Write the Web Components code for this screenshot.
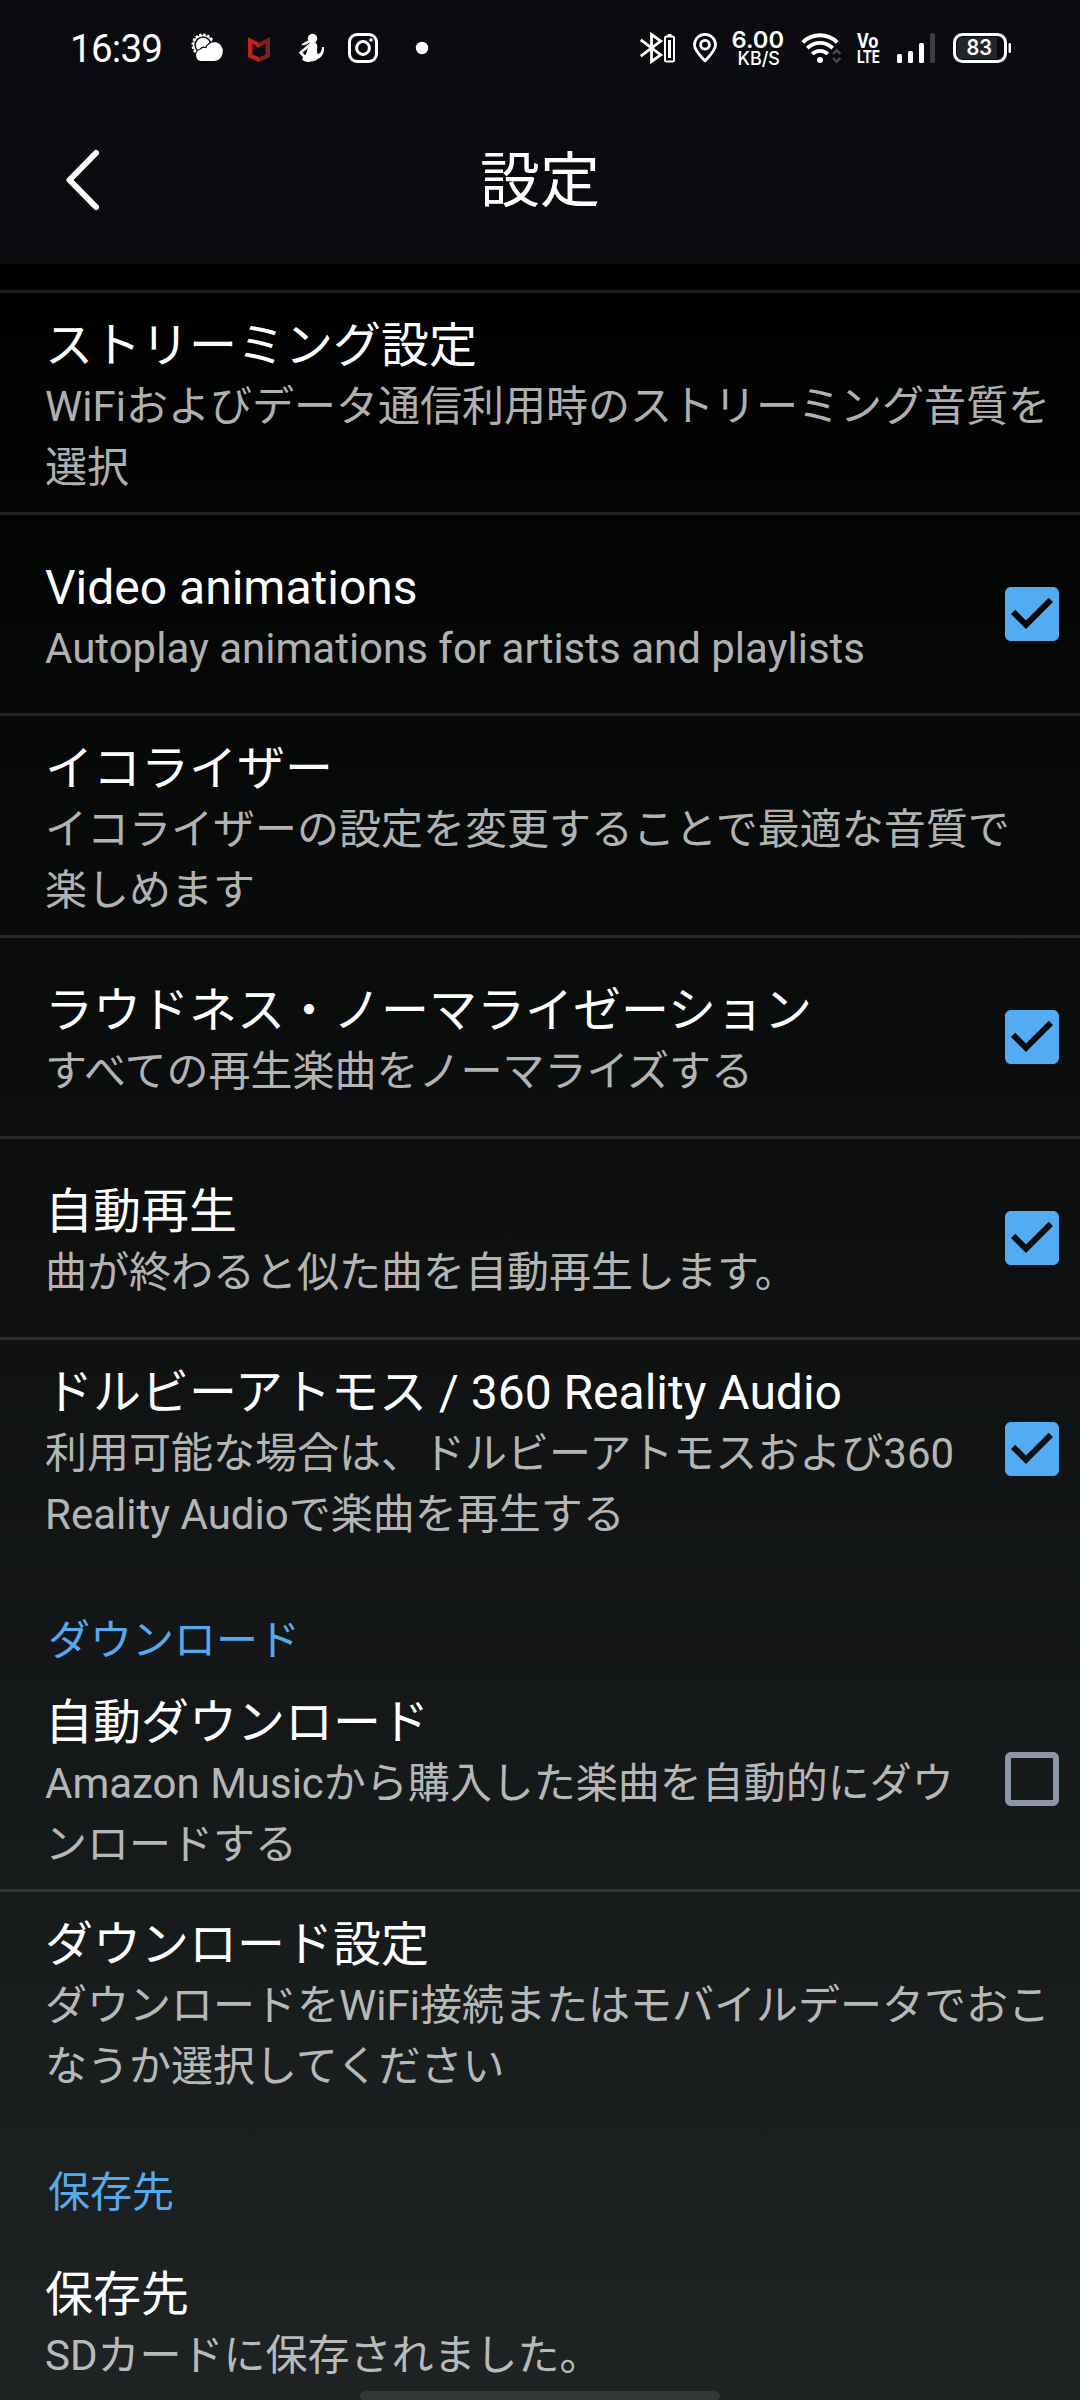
<!DOCTYPE html>
<html lang="ja">
<head>
<meta charset="utf-8">
<title>設定</title>
<style>
  html, body { margin: 0; padding: 0; background: #000; }
  body { font-family: Roboto, "Noto Sans CJK JP", sans-serif; color: #fff; }
</style>
</head>
<body>
<music-settings>
  <status-bar slot="top"></status-bar>
  <title-bar slot="top">設定</title-bar>

  <setting-row><span slot="title">ストリーミング設定</span>WiFiおよびデータ通信利用時のストリーミング音質を<br>選択</setting-row>
  <setting-row check="on"><span slot="title">Video animations</span>Autoplay animations for artists and playlists</setting-row>
  <setting-row><span slot="title">イコライザー</span>イコライザーの設定を変更することで最適な音質で<br>楽しめます</setting-row>
  <setting-row check="on"><span slot="title">ラウドネス・ノーマライゼーション</span>すべての再生楽曲をノーマライズする</setting-row>
  <setting-row check="on"><span slot="title">自動再生</span>曲が終わると似た曲を自動再生します。</setting-row>
  <setting-row check="on" tall last><span slot="title">ドルビーアトモス / 360 Reality Audio</span>利用可能な場合は、ドルビーアトモスおよび360<br>Reality Audioで楽曲を再生する</setting-row>
  <section-label>ダウンロード</section-label>
  <setting-row check="off" tall><span slot="title">自動ダウンロード</span>Amazon Musicから購入した楽曲を自動的にダウ<br>ンロードする</setting-row>
  <setting-row last><span slot="title">ダウンロード設定</span>ダウンロードをWiFi接続またはモバイルデータでおこ<br>なうか選択してください</setting-row>
  <section-label>保存先</section-label>
  <setting-row last><span slot="title">保存先</span>SDカードに保存されました。</setting-row>
</music-settings>

<script>
class Base extends HTMLElement {
  constructor() {
    super();
    this.attachShadow({ mode: 'open' }).innerHTML = this.render();
  }
}

customElements.define('music-settings', class extends Base {
  render() {
    return `<style>
      :host { display: flex; flex-direction: column; position: relative; width: 1080px; height: 2400px; overflow: hidden; background: #000; }
      header { flex: none; height: 264px; background: #0a0b0f; }
      main { flex: 1; min-height: 0; background: linear-gradient(#000, #1f2324); overflow: hidden; }
      .rule { height: 3px; margin-top: 26px; background: rgba(255,255,255,.12); }
      .home { position: absolute; left: 360px; bottom: 0; width: 360px; height: 9px; border-radius: 6px 6px 4px 4px; background: #343839; }
    </style>
    <header><slot name="top"></slot></header>
    <main><div class="rule"></div><slot></slot></main>
    <div class="home"></div>`;
  }
});

/* Each status item is a 96px high cell whose viewBox starts at its own x on the bar. */
const cell = (x0, x1, body) =>
  `<svg width="${x1 - x0}" height="96" viewBox="${x0} 0 ${x1 - x0} 96">${body}</svg>`;

customElements.define('status-bar', class extends Base {
  render() {
    return `<style>
      :host { display: flex; justify-content: space-between; height: 96px; }
      div { display: flex; }
      svg { display: block; flex: none; fill: #fff; }
      .line { fill: none; stroke: #fff; }
      text { font-family: Inter, sans-serif; }
      .r { font-family: Roboto, sans-serif; }
    </style>
    <div>
      ${cell(0, 180, `<text class="r" x="70" y="61.700" font-size="38.500" textLength="93" lengthAdjust="spacing">16:39</text>`)}
      ${cell(180, 236, `
        <circle cx="203" cy="45" r="10.2" class="line" stroke-width="2.6" stroke-dasharray="2.4 1.6"/>
        <circle cx="203" cy="45" r="9.4" class="line" stroke-width="1.4"/>
        <circle cx="203" cy="45" r="7.2"/>
        <g stroke="#0a0b0f" stroke-width="2.4" paint-order="stroke">
        <path d="M201.500 61a5.700 5.700 0 0 1-1.200-11.200a5.400 5.400 0 0 1 6-1.600a8.400 8.400 0 0 1 16.400 3.300c0 5.600-3.800 9.500-8.500 9.500z"/></g>`)}
      ${cell(236, 284, `
        <path fill="#c3201f" d="M248 37l11 5.700v5l-6.500-4.200v10.900l6.500 2.800v5l-11-5.200z"/>
        <path fill="#7e2018" d="M270 37l-11 5.700v5l6.500-4.200v10.900l-6.500 2.800v5l11-5.200z"/>`)}
      ${cell(284, 336, `
        <circle cx="312.500" cy="38.600" r="4.800"/>
        <path d="M309.500 40.500c-3 .3-6 2-8.300 4.500c3 .8 6.500-.5 8.600-3z"/>
        <path d="M309.500 42.500h6c1.500 1.500 2 3.500 1.700 6c-.3 2.200-.2 4 .5 5.800c3-1 4.300-3.500 4.200-7.300l2.100 .2c.5 5.800-2 9.800-6.300 11.900c-2.500 2.700-11.200 3.900-14.700 1.500c-1.200-1-.7-2.800 .6-4.100c2.300-1.700 3.400-3.500 3.400-6z"/>
        <path class="line" stroke-width="2.600" stroke-linejoin="round" d="M309.500 45l-9 7.700l6 5.600"/>`)}
      ${cell(336, 392, `
        <rect class="line" x="349.500" y="34.500" width="27" height="27" rx="7.500" stroke-width="3"/>
        <circle class="line" cx="363" cy="48" r="6.400" stroke-width="3"/>
        <circle cx="371" cy="40" r="1.800"/>`)}
      ${cell(392, 440, `<circle cx="422" cy="48" r="6.200"/>`)}
    </div>
    <div>
      ${cell(630, 684, `
        <path class="line" stroke-width="2.800" d="M640.800 39.800l20 15.200l-9.300 6.500v-27l9.300 6.500l-20 15.200"/>
        <rect class="line" x="665" y="36.500" width="9" height="25" rx="1.500" stroke-width="2"/>
        <rect x="667.500" y="34" width="4" height="2.500"/><rect x="668" y="40" width="3" height="18"/>`)}
      ${cell(684, 726, `
        <path class="line" stroke-width="2.800" stroke-linejoin="round" d="M705 61c-3.200-4-10.500-10-10.500-16.200a10.500 10.500 0 0 1 21 0c0 6.200-7.300 12.200-10.500 16.200z"/>
        <circle class="line" cx="705" cy="44.700" r="4.400" stroke-width="2.800"/>`)}
      ${cell(726, 792, `
        <text x="731.500" y="47.500" font-size="23" font-weight="600" textLength="52.500" lengthAdjust="spacingAndGlyphs">6.00</text>
        <text x="737.500" y="65.200" font-size="18.300" font-weight="500" textLength="42.500" lengthAdjust="spacingAndGlyphs">KB/S</text>`)}
      ${cell(792, 848, `
        <g class="line" stroke-width="3.800">
        <path d="M802.800 42.300a24.500 24.500 0 0 1 34.400 0"/><path d="M807.300 48.200a18 18 0 0 1 25.400 0"/><path d="M812.300 54a11 11 0 0 1 15.400 0"/></g>
        <circle cx="820" cy="60" r="3"/>
        <g fill="none" stroke="#494a4e" stroke-width="2.400"><path d="M833 54l3.700-3.700l3.700 3.700"/><path d="M833 58l3.700 3.700l3.700-3.700"/></g>`)}
      ${cell(848, 888, `
        <g font-weight="700"><text class="r" x="857" y="47.800" font-size="19.500" textLength="21.500" lengthAdjust="spacingAndGlyphs">Vo</text>
        <text class="r" x="857" y="62.700" font-size="19" textLength="22.500" lengthAdjust="spacingAndGlyphs">LTE</text></g>`)}
      ${cell(888, 944, `
        <rect x="897" y="54" width="5" height="9" rx="1.500"/><rect x="908" y="51" width="5" height="12" rx="1.500"/>
        <rect x="919" y="43" width="5" height="20" rx="1.500"/><rect x="930" y="33" width="5" height="30" rx="1.500" fill="#3c3d41"/>`)}
      ${cell(944, 1080, `
        <path fill="#242529" d="M963 37h34v22h-34a6 6 0 0 1-6-6v-10a6 6 0 0 1 6-6z"/>
        <rect class="line" x="954.500" y="34.500" width="51" height="27" rx="8" stroke-width="3"/>
        <rect x="1008.500" y="43" width="2.500" height="10" rx="1"/>
        <text x="966.500" y="55.200" font-size="20.800" font-weight="600" textLength="25.500" lengthAdjust="spacingAndGlyphs">83</text>`)}
    </div>`;
  }
});

customElements.define('title-bar', class extends Base {
  render() {
    return `<style>
      :host { display: grid; grid-template-columns: 1fr auto 1fr; align-items: start; height: 168px; }
      svg { display: block; margin-left: 60px; }
      h1 { margin: 0; padding-top: 36px; font: 400 60px/88px "Noto Sans CJK JP", sans-serif; }
    </style>
    <svg width="48" height="168" viewBox="60 96 48 168" fill="none" stroke="#fff" stroke-width="6" stroke-linecap="round" stroke-linejoin="round"><path d="M96 153l-26.500 27l26.500 27"/></svg>
    <h1><slot></slot></h1>`;
  }
});

const BOX_ON = 'M19 3H5c-1.110 0-2 .9-2 2v14c0 1.100.89 2 2 2h14c1.110 0 2-.9 2-2V5c0-1.100-.89-2-2-2zm-9 14l-5-5 1.410-1.410L10 14.170l7.590-7.590L19 8l-9 9z';
const BOX_OFF = 'M19 5v14H5V5h14m0-2H5c-1.100 0-2 .9-2 2v14c0 1.100.9 2 2 2h14c1.100 0 2-.9 2-2V5c0-1.100-.9-2-2-2z';

customElements.define('check-box', class extends HTMLElement {
  connectedCallback() {
    const on = this.getAttribute('state') === 'on';
    this.attachShadow({ mode: 'open' }).innerHTML = `<style>
      :host { display: block; flex: none; width: 54px; height: 54px; }
      svg { display: block; }
    </style>
    <svg width="54" height="54" viewBox="3 3 18 18"><path fill="${on ? '#52abf3' : '#8c95a9'}" d="${on ? BOX_ON : BOX_OFF}"/></svg>`;
  }
});

customElements.define('setting-row', class extends HTMLElement {
  connectedCallback() {
    const check = this.getAttribute('check');
    this.attachShadow({ mode: 'open' }).innerHTML = `<style>
      :host { display: flex; align-items: center; justify-content: space-between; box-sizing: border-box;
              min-height: 201px; padding: 22px 21px 13px 45px; border-bottom: 3px solid rgba(255,255,255,.12); }
      :host([last]) { min-height: 198px; border-bottom: 0; }
      .title { height: 61px; line-height: 61px; font-size: 48px; white-space: nowrap; }
      .summary { padding-bottom: 1px; line-height: 61px; font-size: 42px; white-space: nowrap; color: rgba(255,255,255,.7); }
      check-box { margin-bottom: 9px; }
      :host([tall]) check-box { margin-bottom: 10px; }
    </style>
    <div><div class="title"><slot name="title"></slot></div><div class="summary"><slot></slot></div></div>
    ${check ? `<check-box state="${check}"></check-box>` : ''}`;
  }
});

customElements.define('section-label', class extends Base {
  render() {
    return `<style>
      :host { display: flex; align-items: flex-start; box-sizing: border-box; height: 111px; padding: 51px 48px 0;
              font-size: 42px; line-height: 61px; color: #57a9ed; }
    </style><span><slot></slot></span>`;
  }
});
</script>
</body>
</html>
